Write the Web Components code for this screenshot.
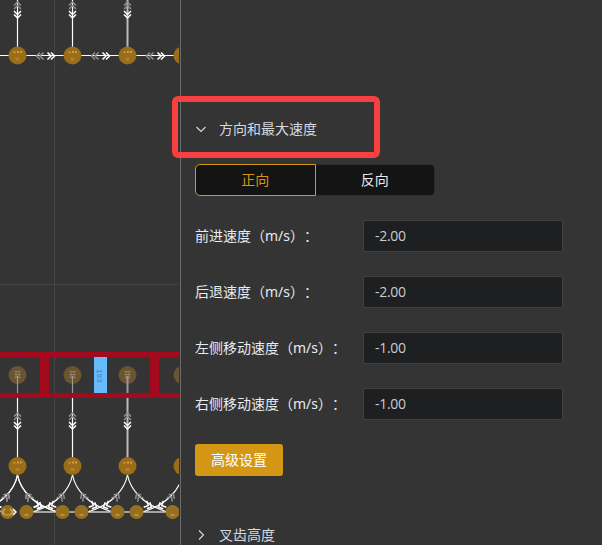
<!DOCTYPE html>
<html>
<head>
<meta charset="utf-8">
<style>
	html, body { margin: 0; height: 100%; background: #343434; overflow: hidden; }
	body { font-family: "Noto Sans", "Noto Sans CJK SC", sans-serif; font-size: 14px; color: #e5eaf3; text-spacing-trim: space-all; }
	map-editor { position: relative; }
</style>
</head>
<body>
<map-editor>
	<route-canvas slot="canvas"></route-canvas>
	<collapse-head open style="margin-top: 111px">方向和最大速度</collapse-head>
	<direction-toggle></direction-toggle>
	<speed-field label="前进速度（m/s）：" value="-2.00"></speed-field>
	<speed-field label="后退速度（m/s）：" value="-2.00"></speed-field>
	<speed-field label="左侧移动速度（m/s）：" value="-1.00"></speed-field>
	<speed-field label="右侧移动速度（m/s）：" value="-1.00"></speed-field>
	<gold-button>高级设置</gold-button>
	<collapse-head style="margin-top: 41px">叉齿高度</collapse-head>
</map-editor>
<script>
class MapEditor extends HTMLElement {
	constructor() {
		super();
		this.attachShadow({ mode: 'open' });
		this.shadowRoot.innerHTML = `
			<style>
				:host { display: flex; width: 602px; height: 545px; overflow: hidden; }
				.canvas { flex: none; width: 180px; height: 545px; border-right: 1px solid #6b6b6b; }
				.panel { flex: none; width: 368px; padding-left: 14px; }
				.mark {
					position: absolute; left: 172px; top: 96px; width: 208px; height: 62px;
					box-sizing: border-box; border: 6px solid #f94040; border-radius: 6px;
				}
			</style>
			<div class="canvas"><slot name="canvas"></slot></div>
			<div class="panel"><slot></slot></div>
			<div class="mark"></div>
		`;
	}
}

class RouteCanvas extends HTMLElement {
	constructor() {
		super();
		this.attachShadow({ mode: 'open' });
		this.shadowRoot.innerHTML = `
			<style>:host { display: block; } svg { display: block; }</style>
			<svg width="179" height="545" viewBox="0 0 179 545">${this.scene()}</svg>
		`;
	}

	// two chevrons, the tip is at x,y and rot turns them (0 points down)
	chevrons(x, y, rot, color) {
		const d = 'M-3.5 -3.5L0 0L3.5 -3.5M-3.5 -7L0 -3.5L3.5 -7';
		return `<path transform="translate(${x} ${y}) rotate(${rot})" d="${d}" fill="none" stroke="${color}" stroke-width="1.5"/>`;
	}

	node(x, y, r, fill) {
		return `<circle cx="${x}" cy="${y}" r="${r}" fill="${fill}"/>`;
	}

	face(x, y) {
		return `<path d="M${x - 4} ${y - 4}h2v1.5h-2zM${x - 0.5} ${y - 4.5}h2v2h-2zM${x + 2.5} ${y - 4.5}h2v2h-2z" fill="#c99f50"/>`
			+ `<rect x="${x - 2}" y="${y + 2}" width="4" height="3" fill="#a98035"/>`;
	}

	scene() {
		const cols = [17.5, 72.5, 127.5, 182.5];
		let s = '';

		// grid
		s += `<path d="M54.5 0V545M0 284.5H180" stroke="#454545" fill="none"/>`;

		// top row
		s += `<path d="M0 55.5H180" stroke="#fff" stroke-width="1.2"/>`;
		cols.slice(0, 3).forEach((x, i) => {
			s += `<path d="M${x} 0V55" stroke="${i == 2 ? '#bbb' : '#fff'}" stroke-width="${i == 2 ? 2 : 1.2}"/>`;
			s += this.chevrons(x, 2, 180, '#8f8f8f');
			s += this.chevrons(x, 18, 0, '#fff');
			s += this.chevrons(x + 19, 56, 90, '#8f8f8f');
			s += this.chevrons(x + 37, 56, -90, '#fff');
		});
		cols.forEach(x => s += this.node(x, 55.5, 9, '#9a6d16') + this.face(x, 55.5));

		// vertical lines under the dim nodes
		cols.slice(0, 3).forEach((x, i) => {
			s += `<path d="M${x} 398V466" stroke="${i == 2 ? '#bbb' : '#fff'}" stroke-width="${i == 2 ? 2 : 1.2}"/>`;
			s += this.chevrons(x, 413, 180, '#8f8f8f');
			s += this.chevrons(x, 429, 0, '#fff');
		});

		// red band and bays
		s += `<path d="M0 354.5H179M0 395.5H179" stroke="#a30a1e" stroke-width="5"/>`;
		s += `<path d="M44.5 357V393M154.5 357V393" stroke="#a30a1e" stroke-width="9"/>`;
		cols.forEach(x => {
			s += this.node(x, 375, 9, '#6a5431');
			s += `<path transform="translate(${x} 0)" d="M-3 371.5h6M-3 374.5h6M-3 377.5h6M-1.5 371v6M1.5 371v6" stroke="#8f8260" fill="none"/>`;
		});
		cols.slice(0, 3).forEach((x, i) => s += `<path d="M${x} 376V393" stroke="#9a9a9a" stroke-width="${i == 2 ? 2 : 1.2}"/>`);
		s += `<rect x="94" y="357" width="13" height="36" fill="#66bbff"/>`;
		s += `<text transform="translate(97.3 369) rotate(90)" font-size="8" font-family="Liberation Sans" fill="#55809e">193</text>`;

		// bottom junction
		s += `<path d="M33 512H180" stroke="#c9c9c9" stroke-width="1.5"/>`;
		[-37.5, 17.5].concat(cols).forEach(x => {
			s += `<path d="M${x} 475C${x - 3} 490 ${x - 16} 505 ${x - 40} 512" stroke="#fff" stroke-width="1.2" fill="none"/>`;
			s += `<path d="M${x} 475C${x + 3} 490 ${x + 16} 505 ${x + 40} 512" stroke="#fff" stroke-width="1.2" fill="none"/>`;
			s += this.chevrons(x + 9, 494, 145, '#8f8f8f');
			s += this.chevrons(x - 9, 494, -145, '#8f8f8f');
			s += this.chevrons(x + 24, 507, -65, '#fff');
			s += this.chevrons(x - 24, 507, 65, '#fff');
		});
		cols.forEach(x => s += this.node(x, 466, 9, '#9a6d16') + this.face(x, 466));
		[7.5, 26.5, 62.5, 81.5, 117.5, 136.5, 172.5].forEach(x => {
			s += this.node(x, 512, 7, '#96701f');
			s += `<rect x="${x - 2}" y="514" width="4" height="2" fill="#b98f42"/>`;
		});
		s += `<path d="M5 509L2 512L5 515M10 509L13 512L10 515" stroke="#d8b06a" stroke-width="1.2" fill="none"/>`;
		s += `<path d="M13 509L16 512L13 515" stroke="#fff" stroke-width="1.5" fill="none"/>`;
		return s;
	}
}

class CollapseHead extends HTMLElement {
	constructor() {
		super();
		this.attachShadow({ mode: 'open' });
		const arrow = this.hasAttribute('open') ? 'M1.5 4L6 8.5L10.5 4' : 'M4 1.5L8.5 6L4 10.5';
		this.shadowRoot.innerHTML = `
			<style>
				:host { display: flex; align-items: center; height: 36px; gap: 12px; font-size: 14px; color: #d5d9e0; }
				svg { flex: none; }
				span { padding-bottom: 2px; }
			</style>
			<svg width="12" height="12" viewBox="0 0 12 12"><path d="${arrow}" fill="none" stroke="#d5d9e0" stroke-width="1.1"/></svg>
			<span><slot></slot></span>
		`;
	}
}

class DirectionToggle extends HTMLElement {
	constructor() {
		super();
		this.attachShadow({ mode: 'open' });
		this.shadowRoot.innerHTML = `
			<style>
				:host { display: flex; width: 240px; height: 32px; margin: 17px 0 24px; font-size: 14px; }
				div { flex: 1; display: flex; align-items: center; justify-content: center; box-sizing: border-box; padding-bottom: 2px; background: #141414; }
				.on { color: #d6960f; border: 1px solid #d2991a; border-radius: 5px 0 0 5px; }
				.off { color: #e5eaf3; border: 1px solid #2c2c2c; border-left: 0; border-radius: 0 5px 5px 0; }
			</style>
			<div class="on">正向</div>
			<div class="off">反向</div>
		`;
	}
}

class SpeedField extends HTMLElement {
	constructor() {
		super();
		this.attachShadow({ mode: 'open' });
		this.shadowRoot.innerHTML = `
			<style>
				:host { display: flex; align-items: center; height: 32px; margin-bottom: 24px; }
				label { width: 168px; flex: none; box-sizing: border-box; padding-bottom: 2px; font-size: 14px; color: #e5eaf3; white-space: nowrap; }
				.input {
					width: 200px; height: 32px; box-sizing: border-box; padding: 0 11px 2px;
					display: flex; align-items: center;
					background: #1e1f21; border: 1px solid #414141; border-radius: 2px;
					font: 14px "Open Sans", sans-serif; letter-spacing: -0.3px; color: #c8ccd2;
				}
			</style>
			<label>${this.getAttribute('label')}</label>
			<div class="input">${this.getAttribute('value')}</div>
		`;
	}
}

class GoldButton extends HTMLElement {
	constructor() {
		super();
		this.attachShadow({ mode: 'open' });
		this.shadowRoot.innerHTML = `
			<style>
				:host {
					display: flex; align-items: center; justify-content: center;
					box-sizing: border-box; width: 88px; height: 32px; padding-bottom: 2px; border-radius: 3px;
					background: #d49715; color: #fff; font-size: 14px;
				}
			</style>
			<slot></slot>
		`;
	}
}

customElements.define('map-editor', MapEditor);
customElements.define('route-canvas', RouteCanvas);
customElements.define('collapse-head', CollapseHead);
customElements.define('direction-toggle', DirectionToggle);
customElements.define('speed-field', SpeedField);
customElements.define('gold-button', GoldButton);
</script>
</body>
</html>
